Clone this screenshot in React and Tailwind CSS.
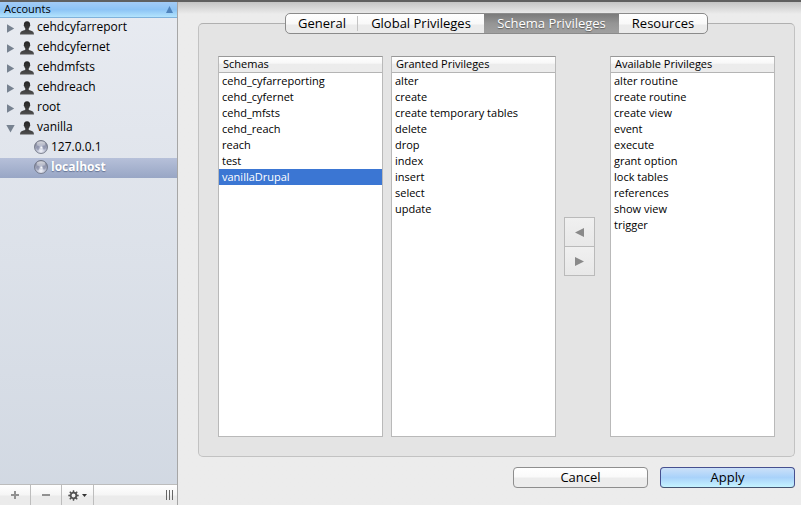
import React from 'react';

const accounts = [
  { name: 'cehdcyfarreport', hosts: [] },
  { name: 'cehdcyfernet', hosts: [] },
  { name: 'cehdmfsts', hosts: [] },
  { name: 'cehdreach', hosts: [] },
  { name: 'root', hosts: [] },
  { name: 'vanilla', open: true, hosts: ['127.0.0.1', 'localhost'] },
];

const tabs = [
  { label: 'General', width: 'w-[72px]' },
  { label: 'Global Privileges', width: 'w-[126px]' },
  { label: 'Schema Privileges', width: 'w-[135px]' },
  { label: 'Resources', width: 'w-[88px]' },
];

const schemas = ['cehd_cyfarreporting', 'cehd_cyfernet', 'cehd_mfsts', 'cehd_reach', 'reach', 'test', 'vanillaDrupal'];
const granted = ['alter', 'create', 'create temporary tables', 'delete', 'drop', 'index', 'insert', 'select', 'update'];
const available = [
  'alter routine', 'create routine', 'create view', 'event', 'execute',
  'grant option', 'lock tables', 'references', 'show view', 'trigger',
];

const gearTeeth = [0, 45, 90, 135, 180, 225, 270, 315];

function PersonIcon() {
  return (
    <svg width="14" height="14" viewBox="0 0 14 14" className="shrink-0" aria-hidden="true">
      <defs>
        <linearGradient id="person" x1="0" y1="0" x2="0" y2="1">
          <stop offset="0" stopColor="#262626" />
          <stop offset="0.6" stopColor="#3a3a3a" />
          <stop offset="1" stopColor="#525252" />
        </linearGradient>
      </defs>
      <path
        d="M7 0.3C4.8 0.3 3.8 1.7 3.9 3.8C3.5 4.1 3.7 5.1 4.3 5.5C4.5 6.6 4.9 7.2 5.3 7.6V8.8C4.4 9.6 2.4 9.7 1.2 10.4C0.4 10.9 0.1 12 0 13.6H14C13.9 12 13.6 10.9 12.8 10.4C11.6 9.7 9.6 9.6 8.7 8.8V7.6C9.1 7.2 9.5 6.6 9.7 5.5C10.3 5.1 10.5 4.1 10.1 3.8C10.2 1.7 9.2 0.3 7 0.3Z"
        fill="url(#person)"
      />
    </svg>
  );
}

function HostIcon() {
  return (
    <svg width="14" height="14" viewBox="0 0 14 14" className="shrink-0" aria-hidden="true">
      <defs>
        <radialGradient id="globe" cx="0.5" cy="0.8" r="0.8">
          <stop offset="0" stopColor="#f2f4fb" />
          <stop offset="0.45" stopColor="#b3b8cc" />
          <stop offset="1" stopColor="#6d7186" />
        </radialGradient>
        <linearGradient id="gloss" x1="0" y1="0" x2="0" y2="1">
          <stop offset="0" stopColor="#fff" stopOpacity="0.75" />
          <stop offset="1" stopColor="#fff" stopOpacity="0.1" />
        </linearGradient>
      </defs>
      <circle cx="7" cy="7" r="6.5" fill="url(#globe)" stroke="#6a6e7e" strokeWidth="0.8" />
      <path d="M2.2 7C3 5.4 5 5.2 5.6 6.4C6 7.6 5 9.4 4.2 10.4C3 9.8 2.2 8.4 2.2 7Z" fill="#8086a0" opacity="0.6" />
      <path d="M8.6 5.6C10 4.9 11.8 5.8 11.8 7.2C11.6 8.8 10.6 9.6 9.8 9.8C8.8 8.6 8.2 6.8 8.6 5.6Z" fill="#8086a0" opacity="0.6" />
      <ellipse cx="7" cy="3.8" rx="4.4" ry="2.6" fill="url(#gloss)" />
      <circle cx="7.4" cy="7.4" r="1" fill="#fff" opacity="0.9" />
    </svg>
  );
}

function Disclosure({ open }) {
  return (
    <svg width="9" height="9" viewBox="0 0 9 9" className="shrink-0" aria-hidden="true">
      <path d={open ? 'M0.3 1H8.7L4.5 8.4Z' : 'M1 0.3L8.2 4.5L1 8.7Z'} fill="#778290" />
    </svg>
  );
}

function Sidebar() {
  return (
    <aside className="flex w-[178px] shrink-0 flex-col border-r border-[#a6a6a6] bg-linear-to-b from-[#e8ebf1] to-[#d1d8e2]">
      <button
        type="button"
        className="flex h-4 items-center justify-between border-b border-[#7fb2dc] bg-linear-to-b from-[#a3cbf5] via-[#8cc3f5] to-[#b3e4fd] pr-1 pb-px pl-1 text-[11px] leading-[14px]"
      >
        <span>Accounts</span>
        <svg width="7" height="7" viewBox="0 0 7 7" aria-hidden="true">
          <path d="M3.5 0L7 7H0Z" fill="#4f84bd" />
        </svg>
      </button>
      <ul className="flex-1 text-xs leading-[18px]">
        {accounts.map((a) => (
          <li key={a.name}>
            <button type="button" aria-expanded={!!a.open} className="flex h-5 w-full items-center pb-0.5 pl-1.5 text-left">
              <span className="pt-0.5">
                <Disclosure open={a.open} />
              </span>
              <span className="pt-0.5 pr-[3px] pl-[5px]">
                <PersonIcon />
              </span>
              <span>{a.name}</span>
            </button>
            {a.hosts.length > 0 && (
              <ul>
                {a.hosts.map((h) => (
                  <li key={h}>
                    <button
                      type="button"
                      className={
                        h === 'localhost'
                          ? 'flex h-5 w-full items-center gap-[3px] bg-linear-to-b from-[#b6c0d9] to-[#98a6c5] pb-0.5 pl-[34px] font-bold text-white text-shadow-[0_1px_1px_rgb(60_75_110/0.6)]'
                          : 'flex h-5 w-full items-center gap-[3px] pb-0.5 pl-[34px]'
                      }
                    >
                      <HostIcon />
                      <span>{h}</span>
                    </button>
                  </li>
                ))}
              </ul>
            )}
          </li>
        ))}
      </ul>
      <div className="flex h-[21px] border-t border-[#bcbcbc] bg-linear-to-b from-white from-0% via-[#f5f5f5] via-50% to-[#ebebeb] to-55%">
        <button type="button" aria-label="Add account" className="flex w-[31px] items-center justify-center border-r border-[#bdbdbd]">
          <svg width="8" height="8" viewBox="0 0 8 8" aria-hidden="true">
            <path d="M3 0H5V3H8V5H5V8H3V5H0V3H3Z" fill="#919191" />
          </svg>
        </button>
        <button type="button" aria-label="Remove account" className="flex w-[31px] items-center justify-center border-r border-[#bdbdbd]">
          <svg width="8" height="8" viewBox="0 0 8 8" aria-hidden="true">
            <path d="M0 3H8V5H0Z" fill="#919191" />
          </svg>
        </button>
        <button type="button" aria-label="Actions" className="flex w-8 items-center justify-center gap-[3px] border-r border-[#bdbdbd]">
          <svg width="11" height="11" viewBox="0 0 11 11" aria-hidden="true">
            <circle cx="5.5" cy="5.5" r="2.8" fill="none" stroke="#505050" strokeWidth="1.7" />
            {gearTeeth.map((angle) => (
              <path key={angle} d="M4.8 0.3H6.2L6.4 2.4H4.6Z" fill="#505050" transform={`rotate(${angle} 5.5 5.5)`} />
            ))}
          </svg>
          <svg width="5" height="3" viewBox="0 0 5 3" aria-hidden="true">
            <path d="M0 0H5L2.5 3Z" fill="#333" />
          </svg>
        </button>
        <div className="flex flex-1 items-center justify-end gap-0.5 pr-1">
          <span className="h-2.5 w-px bg-[#666]" />
          <span className="h-2.5 w-px bg-[#666]" />
          <span className="h-2.5 w-px bg-[#666]" />
        </div>
      </div>
    </aside>
  );
}

function ListBox({ title, items, selected }) {
  return (
    <section className="flex min-w-0 flex-1 flex-col border border-[#b9b9b9] border-t-[#989898] bg-white text-[11px]">
      <h2 className="h-4 border-b border-[#b4b4b4] bg-linear-to-b from-white from-0% via-[#f8f8f8] via-40% to-[#ececec] to-50% pl-1 leading-[14px]">{title}</h2>
      <ul role="listbox" aria-label={title}>
        {items.map((item) => (
          <li
            key={item}
            role="option"
            aria-selected={item === selected}
            className={
              item === selected
                ? 'h-4 truncate bg-[#3b76d3] pl-[3px] leading-4 text-white'
                : 'h-4 truncate pl-[3px] leading-4'
            }
          >
            {item}
          </li>
        ))}
      </ul>
    </section>
  );
}

function Tabs() {
  return (
    <div role="tablist" className="z-10 flex h-[21px] self-center rounded-[5px] border border-[#8b8b8b] bg-linear-to-b from-white from-0% via-[#f9f9f9] via-50% to-[#ebebeb] to-60% text-[13px] leading-[19px]">
      {tabs.map((t, i) => (
        <button
          key={t.label}
          type="button"
          role="tab"
          aria-selected={i === 2}
          className={[
            t.width,
            'whitespace-nowrap',
            i === 2 ? 'bg-linear-to-b from-[#7b7b7b] via-[#959595] to-[#a0a0a0] text-white text-shadow-[0_1px_1px_rgb(0_0_0/0.4)]' : '',
            i === 0 ? 'bg-linear-to-b from-[#c4c4c4] to-[#c4c4c4] bg-[length:1px_15px] bg-right bg-no-repeat' : '',
          ].join(' ')}
        >
          {t.label}
        </button>
      ))}
    </div>
  );
}

export default function App() {
  return (
    <div className="flex min-h-screen flex-col border-t-2 border-[#5f5f5f] bg-[#ececec] font-['Lucida_Grande','Open_Sans',sans-serif] text-black">
      <div className="flex flex-1">
        <Sidebar />
        <main className="flex min-w-0 flex-1 flex-col bg-linear-to-b from-[#c4c4c4] from-0% to-[#ececec] to-[12px] pt-[11px] pr-1.5 pb-[17px] pl-5">
          <Tabs />
          <div className="-mt-[11px] flex flex-1 rounded-[5px] border border-[#c2c2c2] border-t-[#b0b0b0] bg-[#e4e4e4] px-[19px] pt-8 pb-[19px]">
            <div className="flex flex-1 gap-2">
              <ListBox title="Schemas" items={schemas} selected="vanillaDrupal" />
              <ListBox title="Granted Privileges" items={granted} />
              <div className="mr-[7px] flex w-[31px] flex-col justify-center">
                <button type="button" aria-label="Grant" className="flex h-[30px] items-center justify-center border border-[#bababa] bg-linear-to-b from-[#f0f0f0] to-[#e8e8e8]">
                  <svg width="9" height="9" viewBox="0 0 9 9" aria-hidden="true">
                    <path d="M9 0V9L0 4.5Z" fill="#8a8a8a" />
                  </svg>
                </button>
                <button type="button" aria-label="Revoke" className="-mt-px flex h-[30px] items-center justify-center border border-[#bababa] bg-linear-to-b from-[#f0f0f0] to-[#e8e8e8]">
                  <svg width="9" height="9" viewBox="0 0 9 9" aria-hidden="true">
                    <path d="M0 0V9L9 4.5Z" fill="#8a8a8a" />
                  </svg>
                </button>
              </div>
              <ListBox title="Available Privileges" items={available} />
            </div>
          </div>
          <div className="mt-2.5 flex justify-end gap-3 text-[13px] leading-[19px]">
            <button type="button" className="h-[21px] w-[135px] rounded-[4px] border border-[#8e8e8e] bg-linear-to-b from-white from-0% via-[#fafafa] via-45% to-[#ececec] to-55%">
              Cancel
            </button>
            <button type="button" className="h-[21px] w-[135px] rounded-[4px] border border-[#47508f] border-b-[#44546f] bg-linear-to-b from-[#cbe0f8] from-0% via-[#a9d2fa] via-50% to-[#c5f3ff] to-100%">
              Apply
            </button>
          </div>
        </main>
      </div>
    </div>
  );
}
